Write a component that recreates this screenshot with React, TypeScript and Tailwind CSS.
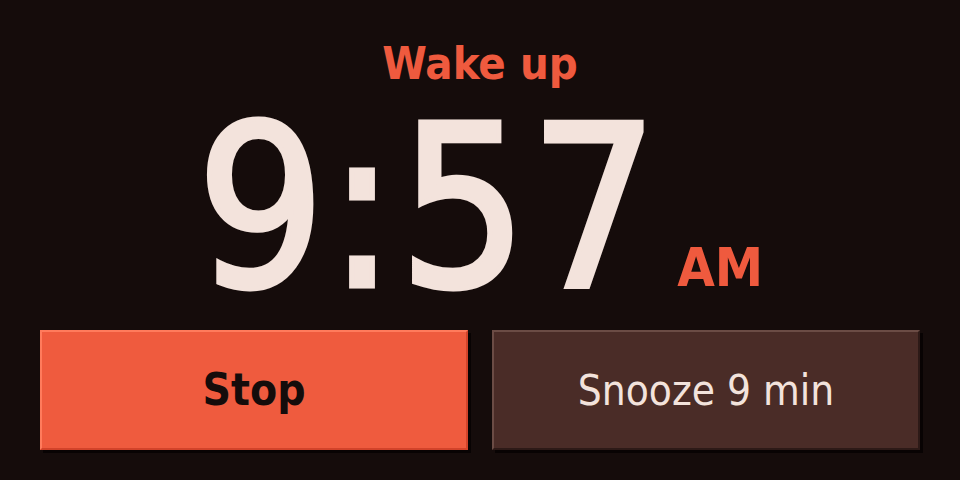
const font = "font-['DejaVu_Sans_Condensed','DejaVu_Sans',sans-serif] font-stretch-condensed";

export default function App() {
  return (
    <div className={`flex h-[480px] w-[960px] flex-col bg-[#150c0b] px-10 pb-[30px] ${font}`}>
      <h1 className="mt-[41px] text-center text-[45px] leading-none font-bold text-[#ef5a3e]">Wake up</h1>

      <div className="mt-[11px] flex items-baseline justify-center gap-[16px]">
        <span className="text-[224px] leading-none tracking-[3px] text-[#f3e3dc] [-webkit-text-stroke:5px_#f3e3dc]">
          9:57
        </span>
        <span className="text-[54px] leading-none font-bold text-[#ef5a3e]">AM</span>
      </div>

      <div className="mt-auto flex gap-6">
        <button className="h-[120px] flex-1 border-2 border-t-[#ff7b5c] border-r-[#d2432a] border-b-[#d2432a] border-l-[#ff7b5c] bg-[#ef5b3e] text-[44px] font-bold text-[#150c0b] shadow-[3px_3px_0_#080303]">
          Stop
        </button>
        <button className="h-[120px] flex-1 border-2 border-t-[#6b4c45] border-r-[#2d1a17] border-b-[#2d1a17] border-l-[#6b4c45] bg-[#4a2c27] text-[42px] text-[#f3e3dc] shadow-[3px_3px_0_#080303]">
          Snooze 9 min
        </button>
      </div>
    </div>
  );
}
